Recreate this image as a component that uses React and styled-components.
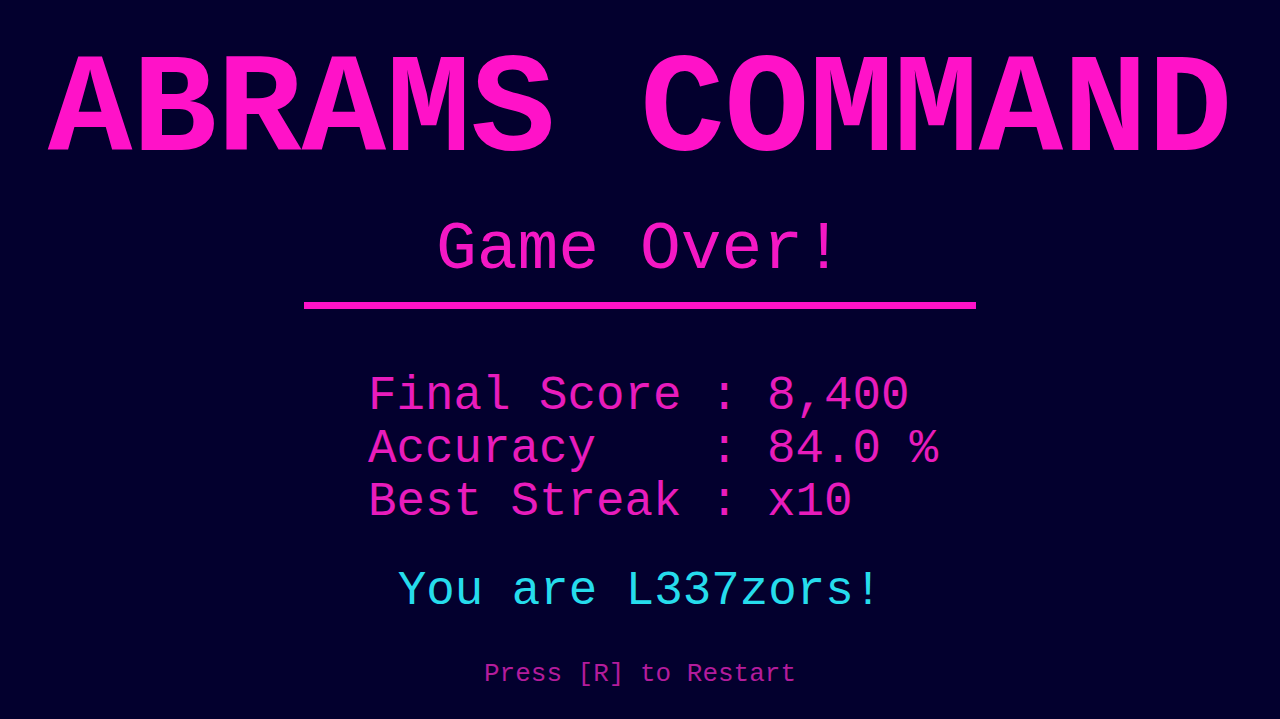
import React from "react";
import styled, { createGlobalStyle } from "styled-components";

const GlobalStyle = createGlobalStyle`
  html, body {
    margin: 0;
    padding: 0;
    background: #03002e;
  }
  body {
    font-family: "Liberation Mono", "Courier New", monospace;
  }
`;

const Screen = styled.main`
  width: 1280px;
  height: 719px;
  background: #03002e;
  display: flex;
  flex-direction: column;
  align-items: center;
  padding-top: 42px;
  box-sizing: border-box;
  overflow: hidden;
`;

const Title = styled.h1`
  margin: 0;
  font-size: 141px;
  line-height: 1;
  font-weight: 700;
  color: #ff12c8;
  white-space: pre;
`;

const Heading = styled.h2`
  margin: 33px 0 0;
  font-size: 68px;
  line-height: 1;
  font-weight: 400;
  color: #f418c4;
  white-space: pre;
`;

const Divider = styled.hr`
  margin: 18px 0 0;
  width: 672px;
  height: 7px;
  border: 0;
  background: #ff12c8;
`;

const Stats = styled.dl`
  margin: 61px 0 0;
  width: 544px;
  display: flex;
  flex-direction: column;
  font-size: 47.5px;
  line-height: 53px;
  color: #e81cbc;
`;

const StatRow = styled.div`
  display: grid;
  grid-template-columns: 12ch 2ch auto;
  white-space: pre;
`;

const Label = styled.dt`
  margin: 0;
`;

const Sep = styled.span``;

const Value = styled.dd`
  margin: 0;
`;

const Verdict = styled.p`
  margin: 39px 0 0;
  font-size: 47.5px;
  line-height: 1;
  color: #26dcec;
  white-space: pre;
`;

const Hint = styled.p`
  margin: 45px 0 0;
  font-size: 26px;
  line-height: 1;
  color: #b41c9c;
  white-space: pre;
`;

const stats = [
  { label: "Final Score", value: "8,400" },
  { label: "Accuracy", value: "84.0 %" },
  { label: "Best Streak", value: "x10" },
];

export default function App() {
  return (
    <>
      <GlobalStyle />
      <Screen>
        <Title>ABRAMS COMMAND</Title>
        <Heading>Game Over!</Heading>
        <Divider />
        <Stats>
          {stats.map((s) => (
            <StatRow key={s.label}>
              <Label>{s.label}</Label>
              <Sep>: </Sep>
              <Value>{s.value}</Value>
            </StatRow>
          ))}
        </Stats>
        <Verdict>You are L337zors!</Verdict>
        <Hint>Press [R] to Restart</Hint>
      </Screen>
    </>
  );
}
